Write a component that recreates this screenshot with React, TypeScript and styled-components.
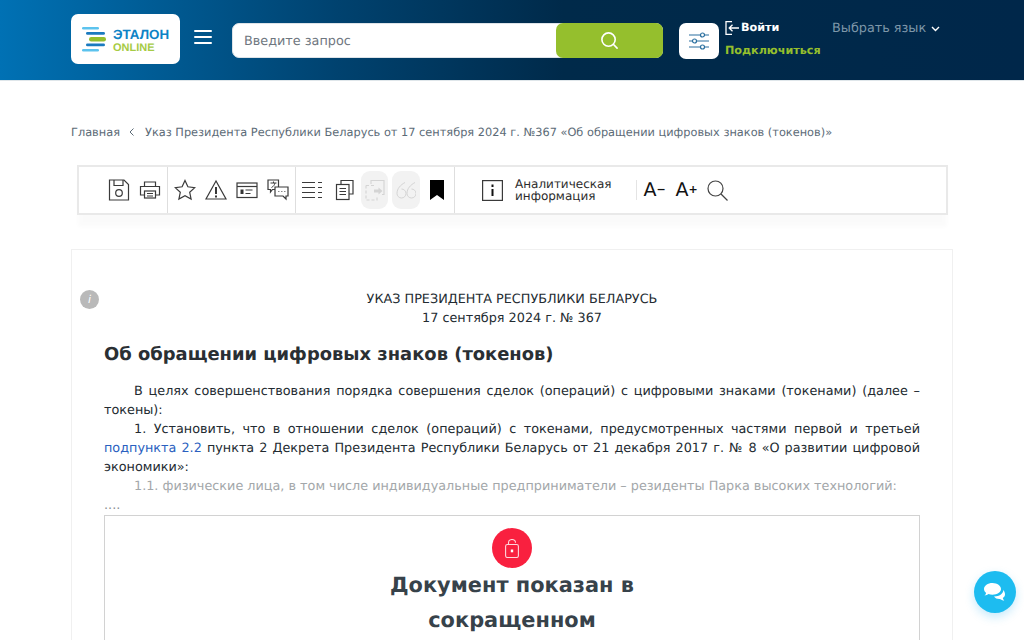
import React from "react";
import styled, { createGlobalStyle } from "styled-components";

const Global = createGlobalStyle`
  html, body { margin: 0; padding: 0; height: 640px; overflow: hidden; background: #fff; }
  body { font-family: "DejaVu Sans", "Liberation Sans", sans-serif; text-rendering: geometricPrecision; }
  * { box-sizing: border-box; }
`;

const Page = styled.div`
  width: 1024px;
  height: 640px;
  overflow: hidden;
  position: relative;
`;

const Header = styled.header`
  height: 81px;
  background: linear-gradient(90deg, #0071b4 0%, #00426f 33%, #002a4a 55%, #00274a 100%);
  border-bottom: 1px solid #dfe6ea;
  display: flex;
  align-items: flex-start;
  padding-left: 71px;
`;

const LogoCard = styled.div`
  width: 109px;
  height: 50px;
  margin-top: 14px;
  background: #fff;
  border-radius: 7px;
  display: flex;
  align-items: center;
  gap: 6px;
  padding-left: 11px;
`;

const LogoWords = styled.div`
  display: flex;
  flex-direction: column;
  gap: 1px;
  margin-top: 4px;
  font-family: "Liberation Sans", sans-serif;
  font-weight: 700;
`;

const LogoTop = styled.span`
  font-size: 13.4px;
  line-height: 14px;
  color: #0e83c6;
`;

const LogoBottom = styled.span`
  font-size: 11px;
  line-height: 11px;
  color: #a6cb45;
`;

const Burger = styled.button`
  width: 18px;
  height: 14px;
  margin: 30px 0 0 14px;
  padding: 0;
  border: 0;
  background: transparent;
  display: flex;
  flex-direction: column;
  justify-content: space-between;
  & > i { display: block; height: 2px; background: #fff; border-radius: 1px; }
`;

const Search = styled.div`
  width: 431px;
  height: 35px;
  margin: 23px 0 0 20px;
  display: flex;
  background: #fff;
  border-radius: 7px;
  border: 1px solid #dde3e8;
`;

const SearchInput = styled.div`
  flex: 1;
  font-size: 12.8px;
  line-height: 35px;
  padding-left: 11px;
  color: #6f7780;
`;

const SearchBtn = styled.div`
  width: 107px;
  margin: -1px;
  background: #95bf2d;
  border-radius: 7px;
  display: flex;
  align-items: center;
  justify-content: center;
`;

const FilterBtn = styled.div`
  width: 40px;
  height: 36px;
  margin: 22.5px 0 0 16px;
  background: #fff;
  border-radius: 7px;
  display: flex;
  align-items: center;
  justify-content: center;
`;

const Auth = styled.div`
  margin: 20px 0 0 6px;
  width: 107px;
  height: 39px;
  display: flex;
  flex-direction: column;
  justify-content: space-between;
  font-size: 11.2px;
  line-height: 16px;
  font-weight: 700;
`;

const Login = styled.div`
  display: flex;
  align-items: center;
  gap: 2px;
  color: #fff;
`;

const Connect = styled.div`
  color: #95bf2d;
`;

const Lang = styled.div`
  margin-top: 21px;
  font-size: 12.8px;
  line-height: 15px;
  color: #7e97a9;
  display: flex;
  align-items: center;
  gap: 5px;
`;

const Crumbs = styled.nav`
  display: flex;
  align-items: center;
  padding: 43px 0 0 71px;
  height: 59px;
  font-size: 11.35px;
  color: #5c6b77;
`;

const CrumbSep = styled.span`
  margin: 0 11px 0 9px;
  display: flex;
  align-items: center;
`;

const ToolbarWrap = styled.div`
  margin: 25px 0 0 77px;
  width: 871px;
  box-shadow: 0 13px 4px -1px rgba(0, 0, 0, 0.018);
`;

const Toolbar = styled.div`
  height: 50px;
  border: 2px solid #e9e9e9;
  display: flex;
  align-items: stretch;
  background: #fff;
`;

const Group = styled.div<{ $w: number; $pl: number; $last?: boolean }>`
  width: ${(p) => p.$w}px;
  padding-left: ${(p) => p.$pl}px;
  display: flex;
  align-items: center;
  flex: none;
  border-right: ${(p) => (p.$last ? "0" : "1px solid #dedede")};
`;

const Tool = styled.span<{ $off?: boolean; $w?: number; $gap?: number }>`
  width: ${(p) => p.$w ?? 31}px;
  height: 38px;
  margin-right: ${(p) => p.$gap ?? 0}px;
  flex: none;
  display: flex;
  align-items: center;
  justify-content: center;
  border-radius: 9px;
  background: ${(p) => (p.$off ? "#f2f2f2" : "transparent")};
`;

const ToolLabel = styled.span`
  font-size: 12px;
  line-height: 12.5px;
  color: #2b2b2b;
  margin-left: 10.5px;
  width: 122px;
  flex: none;
  border-right: 1px solid #e4e4e4;
  height: 20px;
  display: flex;
  align-items: center;
`;

const SizeGlyph = styled.span`
  font-size: 19px;
  line-height: 19px;
  color: #111;
  white-space: nowrap;
  margin-left: 1px;
`;

const SizeMark = styled.span`
  font-size: 11px;
  font-weight: 700;
  vertical-align: 3px;
`;

const Card = styled.article`
  position: relative;
  margin: 34px 0 0 71px;
  width: 882px;
  height: 500px;
  border: 1px solid #f0f0f0;
  padding: 40px 32px 0;
  color: #232b31;
  font-size: 12.8px;
  line-height: 19px;
`;

const InfoDot = styled.span`
  position: absolute;
  left: 8px;
  top: 40px;
  width: 19px;
  height: 19px;
  border-radius: 50%;
  background: #b9b9b9;
  color: #fff;
  font: italic 400 11px/19px "DejaVu Sans", sans-serif;
  text-align: center;
`;

const Center = styled.div`
  text-align: center;
`;

const Title = styled.h1`
  margin: 16px 0 16px;
  font-size: 17.92px;
  line-height: 22px;
  font-weight: 700;
  color: #2a2f33;
`;

const Para = styled.p<{ $faded?: boolean }>`
  margin: 0;
  text-indent: 30px;
  text-align: justify;
  color: ${(p) => (p.$faded ? "#a3a7aa" : "inherit")};
`;

const DocLink = styled.a`
  color: #2a5fc0;
  text-decoration: none;
`;

const Dots = styled.div`
  color: #8a8f93;
`;

const Locked = styled.section`
  border: 1px solid #d2d2d2;
  height: 300px;
  padding-top: 12px;
  display: flex;
  flex-direction: column;
  align-items: center;
`;

const LockCircle = styled.span`
  width: 40px;
  height: 40px;
  border-radius: 50%;
  background: #f9203f;
  display: flex;
  align-items: center;
  justify-content: center;
  flex: none;
`;

const LockTitle = styled.h2`
  margin: 0;
  width: 300px;
  text-align: center;
  font-size: 20.9px;
  line-height: 35px;
  font-weight: 700;
  color: #37424a;
`;

const Chat = styled.div`
  position: absolute;
  left: 974px;
  top: 571px;
  width: 42px;
  height: 42px;
  border-radius: 50%;
  background: #1dbcf0;
  box-shadow: 0 4px 10px rgba(27, 170, 238, 0.25);
  display: flex;
  align-items: center;
  justify-content: center;
`;

const S = { fill: "none", stroke: "#3a3a3a", strokeWidth: 1.2 } as const;

function Ico({ children }: { children: React.ReactNode }) {
  return (
    <svg width={22} height={22} viewBox="0 0 22 22" {...S}>
      {children}
    </svg>
  );
}

export default function App() {
  return (
    <Page>
      <Global />
      <Header>
        <LogoCard>
          <svg width="25" height="25" viewBox="0 0 25 25">
            <rect x="0" y="0" width="17" height="2.600" rx="1.300" fill="#5cc3ee" />
            <rect x="4" y="5" width="19" height="2.800" rx="1.400" fill="#1a7abf" />
            <rect x="7" y="10" width="17" height="4.400" rx="2.200" fill="#95bf2d" />
            <rect x="4" y="16.500" width="19" height="2.800" rx="1.400" fill="#1a7abf" />
            <rect x="0" y="22" width="17" height="2.600" rx="1.300" fill="#5cc3ee" />
          </svg>
          <LogoWords>
            <LogoTop>ЭТАЛОН</LogoTop>
            <LogoBottom>ONLINE</LogoBottom>
          </LogoWords>
        </LogoCard>
        <Burger aria-label="Меню">
          <i />
          <i />
          <i />
        </Burger>
        <Search>
          <SearchInput>Введите запрос</SearchInput>
          <SearchBtn>
            <svg width="19" height="19" viewBox="0 0 20 20" fill="none" stroke="#fff" strokeWidth="1.700">
              <circle cx="9" cy="9" r="7" />
              <path d="M14 14l4 4" strokeLinecap="round" />
            </svg>
          </SearchBtn>
        </Search>
        <FilterBtn>
          <svg width="20" height="18" viewBox="0 0 20 18" fill="none" stroke="#2a6f9f" strokeWidth="1.200">
            <path d="M0 3h11.500M15.500 3H20M0 9h3.500M7.500 9H20M0 15h11.500M15.500 15H20" />
            <circle cx="13.500" cy="3" r="2" />
            <circle cx="5.500" cy="9" r="2" />
            <circle cx="13.500" cy="15" r="2" />
          </svg>
        </FilterBtn>
        <Auth>
          <Login>
            <svg width="14" height="14" viewBox="0 0 14 14" fill="none" stroke="#fff" strokeWidth="1.300">
              <path d="M7 0.700H1v12.600h6M14 7H4.500M7.500 3.700L4.200 7l3.300 3.300" />
            </svg>
            Войти
          </Login>
          <Connect>Подключиться</Connect>
        </Auth>
        <Lang>
          Выбрать язык
          <svg width="9" height="6" viewBox="0 0 9 6" fill="none" stroke="#fff" strokeWidth="1.400">
            <path d="M1 1l3.500 3.500L8 1" />
          </svg>
        </Lang>
      </Header>

      <Crumbs>
        Главная
        <CrumbSep>
          <svg width="5" height="8" viewBox="0 0 5 8" fill="none" stroke="#5c6b77" strokeWidth="1">
            <path d="M4.500 0.500L1 4l3.500 3.500" />
          </svg>
        </CrumbSep>
        Указ Президента Республики Беларусь от 17 сентября 2024 г. №367 «Об обращении цифровых знаков (токенов)»
      </Crumbs>

      <ToolbarWrap>
        <Toolbar>
          <Group $w={89} $pl={24.5}>
            <Tool>
              <Ico>
                <path d="M1.500 1h14.500l4.500 4.500v15.500h-19z" />
                <path d="M6 1v5.500h9V1" />
                <circle cx="11" cy="14" r="3.300" />
              </Ico>
            </Tool>
            <Tool>
              <Ico>
                <path d="M5.500 7V3h11v4M5.500 16H1.500V7.500h19V16h-4" />
                <rect x="5.500" y="12" width="11" height="7" />
                <path d="M8 14.500h6M8 17h6" />
              </Ico>
            </Tool>
          </Group>
          <Group $w={128} $pl={1}>
            <Tool>
              <Ico>
                <path d="M11 1.500l2.900 6.300 6.900.8-5.100 4.700 1.400 6.800L11 16.700l-6.100 3.400 1.400-6.800L1.200 8.600l6.900-.8z" />
              </Ico>
            </Tool>
            <Tool>
              <Ico>
                <path d="M11 2L1 20h20z" />
                <path d="M11 8v7M11 16.500v2" strokeWidth="1.800" stroke="#222" />
              </Ico>
            </Tool>
            <Tool>
              <Ico>
                <rect x="1" y="4" width="20" height="14.500" />
                <path d="M1 7.500h20" />
                <path d="M4.500 10.500h3v4.500h-3z" fill="#333" stroke="none" />
                <path d="M9.500 11h7M9.500 14.500h5" />
              </Ico>
            </Tool>
            <Tool>
              <Ico>
                <path d="M1 1h10.500v9.500H5.500l-2 2.500v-2.500H1z" />
                <path d="M8 8h13v9h-2v3l-3-3H8z" fill="#fff" />
                <path d="M3.500 4h6M6.500 2.500v1.500M4.500 8.500c2-1 3-2.500 3.500-4.500" strokeWidth="1" />
                <path d="M11 12.500h1.500M14 12.500h1.500M17 12.500h1.500" stroke="#888" />
              </Ico>
            </Tool>
          </Group>
          <Group $w={159} $pl={1}>
            <Tool>
              <Ico>
                <path d="M0 3.500h13M16 3.500h4M0 8.500h13M16 8.500h4M0 13.500h13M16 13.500h4M0 18.500h13M16 18.500h4" />
              </Ico>
            </Tool>
            <Tool $w={33}>
              <Ico>
                <path d="M7 5.500V1.500h12v13.500h-4" />
                <rect x="2.500" y="5.500" width="12.500" height="15" fill="#fff" />
                <path d="M5.500 9.500h6.500M5.500 12.500h6.500M5.500 15.500h6.500" />
              </Ico>
            </Tool>
            <Tool $off $w={27} $gap={4}>
              <svg width="20" height="22" viewBox="0 0 20 22" fill="none" stroke="#d4d4d4" strokeWidth="1.100">
                <path d="M6 5V1.500h13v14h-2" />
                <path d="M1 6.500h10M1 6.500V21h11v-4" strokeDasharray="3 2" />
                <path d="M9 10.500h4.500V8.500l4 3.500-4 3.500v-2H9z" fill="#d4d4d4" stroke="none" />
              </svg>
            </Tool>
            <Tool $off $w={28}>
              <svg width="20" height="17" viewBox="0 0 20 17" fill="none" stroke="#d4d4d4" strokeWidth="1">
                <path d="M9 0.500C4.500 3 1 6.500 1 11.500a4.500 4.500 0 1 0 4.500-4.500M19 0.500C14.500 3 11 6.500 11 11.500a4.500 4.500 0 1 0 4.500-4.500" />
              </svg>
            </Tool>
            <Tool $w={34}>
              <svg width="14" height="20" viewBox="0 0 14 20">
                <path d="M0 0h14v20l-7-5-7 5z" fill="#000" />
              </svg>
            </Tool>
          </Group>
          <Group $w={491} $pl={25.5} $last>
            <Tool $w={24}>
              <svg width="21" height="21" viewBox="0 0 21 21" fill="none" stroke="#3a3a3a" strokeWidth="1.200">
                <rect x="0.600" y="0.600" width="19.800" height="19.800" />
                <path d="M10.500 4.500v2.400M10.500 9v7" stroke="#111" strokeWidth="2" />
              </svg>
            </Tool>
            <ToolLabel>
              Аналитическая
              <br />
              информация
            </ToolLabel>
            <Tool $w={34}>
              <SizeGlyph>
                A<SizeMark>−</SizeMark>
              </SizeGlyph>
            </Tool>
            <Tool $w={30}>
              <SizeGlyph>
                A<SizeMark>+</SizeMark>
              </SizeGlyph>
            </Tool>
            <Tool $w={32}>
              <svg width="21" height="21" viewBox="0 0 21 21" fill="none" stroke="#444" strokeWidth="1.200">
                <circle cx="8.500" cy="8.500" r="7.500" />
                <path d="M14 14l6.500 6.500" />
              </svg>
            </Tool>
          </Group>
        </Toolbar>
      </ToolbarWrap>

      <Card>
        <InfoDot>i</InfoDot>
        <Center>
          УКАЗ ПРЕЗИДЕНТА РЕСПУБЛИКИ БЕЛАРУСЬ
          <br />
          17 сентября 2024 г. № 367
        </Center>
        <Title>Об обращении цифровых знаков (токенов)</Title>
        <Para>В целях совершенствования порядка совершения сделок (операций) с цифровыми знаками (токенами) (далее – токены):</Para>
        <Para>
          1. Установить, что в отношении сделок (операций) с токенами, предусмотренных частями первой и третьей{" "}
          <DocLink>подпункта 2.2</DocLink> пункта 2 Декрета Президента Республики Беларусь от 21 декабря 2017 г. № 8 «О развитии цифровой экономики»:
        </Para>
        <Para $faded>1.1. физические лица, в том числе индивидуальные предприниматели – резиденты Парка высоких технологий:</Para>
        <Dots>....</Dots>
        <Locked>
          <LockCircle>
            <svg width="14" height="19" viewBox="0 0 14 19" fill="none" stroke="#ffd5db" strokeWidth="1.100">
              <rect x="0.600" y="5.500" width="12.800" height="13" rx="1.800" />
              <path d="M3.500 5.500V3.800a3.500 3.300 0 0 1 7 0" />
              <rect x="5.800" y="10.500" width="2.400" height="2.800" fill="#fff" stroke="none" />
            </svg>
          </LockCircle>
          <LockTitle>Документ показан в сокращенном</LockTitle>
        </Locked>
      </Card>

      <Chat>
        <svg width="24" height="20" viewBox="0 0 24 20" fill="#fff">
          <path d="M9.500 1C4.800 1 1 3.700 1 7c0 1.500.8 2.900 2.100 4-.2 1-.8 1.900-1.600 2.500 1.600 0 3-.6 4-1.400 1.200.4 2.500.6 4 .6 4.700 0 8.500-2.600 8.500-5.700S14.200 1 9.500 1z" />
          <path d="M20.200 7.700c.1.300.1.600.1.900-.3 3.300-4 6-9.300 5.900 1.200 1.800 3.500 2.700 6 2.500 1 .8 2.700 1.500 4.300 1.500-.7-.6-1.300-1.500-1.500-2.500 1.400-.9 2.200-2.200 2.200-3.800 0-1.700-.9-3.300-1.800-4.500z" />
        </svg>
      </Chat>
    </Page>
  );
}
